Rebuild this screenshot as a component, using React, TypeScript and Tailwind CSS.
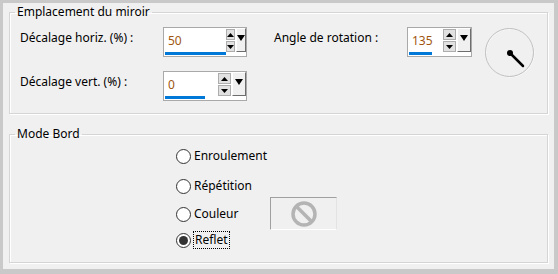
import * as React from "react";

type SpinProps = {
  value: string;
  width: string;
  bar: string;
};

const ArrowUp = () => (
  <svg width="7" height="4" viewBox="0 0 7 4">
    <path d="M0 4 L3.5 0 L7 4 Z" fill="#000" />
  </svg>
);

const ArrowDown = ({ w = 7, h = 4 }: { w?: number; h?: number }) => (
  <svg width={w} height={h} viewBox={`0 0 ${w} ${h}`}>
    <path d={`M0 0 L${w} 0 L${w / 2} ${h} Z`} fill="#000" />
  </svg>
);

const Spinner = ({ value, width, bar }: SpinProps) => {
  return (
    <div className={`flex h-[30px] ${width} border border-[#a9a9a9] bg-white`}>
      <div className="flex flex-1 flex-col pl-[1px]">
        <span className="mt-[5px] ml-[3px] text-[12px] leading-4 text-[#a0560f]">{value}</span>
        <div className={`mt-[3px] h-[3px] ${bar} bg-[#0078d7]`} />
      </div>
      <div className="mt-[1px] flex w-[13px] flex-col gap-[1px]">
        <div className="flex h-[11px] items-center justify-center border border-[#adadad] bg-[#e1e1e1]">
          <ArrowUp />
        </div>
        <div className="flex h-[11px] items-center justify-center border border-[#adadad] bg-[#e1e1e1]">
          <ArrowDown />
        </div>
      </div>
      <div className="ml-[1px] flex h-[24px] w-[14px] justify-center border-t border-l border-r border-b border-t-white border-l-white border-r-[#6d6d6d] border-b-[#6d6d6d] bg-[#f0f0f0] pt-[6px]">
        <ArrowDown w={8} h={6} />
      </div>
    </div>
  );
};

const Dial = () => (
  <svg width="50" height="50" viewBox="0 0 50 50">
    <circle cx="25" cy="25" r="24" fill="none" stroke="#ffffff" strokeWidth="1" />
    <circle cx="24.5" cy="24.5" r="24" fill="none" stroke="#bdbdbd" strokeWidth="1" />
    <line x1="25" y1="25" x2="38" y2="38" stroke="#000" strokeWidth="2.5" strokeLinecap="round" />
    <circle cx="25" cy="25" r="3" fill="#000" />
  </svg>
);

const Radio = ({ label, checked, focused }: { label: string; checked?: boolean; focused?: boolean }) => (
  <div className="flex h-4 items-center">
    <div className="flex h-[15px] w-[15px] items-center justify-center rounded-full border border-[#333333] bg-white">
      {checked && <div className="h-[9px] w-[9px] rounded-full bg-[#333333]" />}
    </div>
    <span
      className={
        focused
          ? "ml-[2px] border border-dotted border-black px-[1px] leading-4"
          : "ml-[3px] leading-4"
      }
    >
      {label}
    </span>
  </div>
);

export default function App() {
  return (
    <div className="h-[274px] w-[558px] bg-[#c9c9c9] pt-[3px] pr-[4px] pb-[5px] pl-[3px] font-['Segoe_UI','Noto_Sans',sans-serif] text-[12px] text-black">
      <div className="flex h-full flex-col bg-[#f0f0f0] pt-[1px]">
        <fieldset className="mx-[6px] border border-[#d5d5d5] pb-[12px] shadow-[inset_1px_1px_0_#ffffff,1px_1px_0_#ffffff]">
          <legend className="ml-[5px] px-[2px] leading-4">Emplacement du miroir</legend>
          <div className="flex items-start pt-[7px] pl-[10px]">
            <div className="flex flex-col gap-[14px]">
              <div className="flex items-start">
                <span className="mt-[3px] w-[143px] leading-4">Décalage horiz. (%) :</span>
                <Spinner value="50" width="w-[84px]" bar="w-[61px]" />
              </div>
              <div className="flex items-start">
                <span className="mt-[3px] w-[143px] leading-4">Décalage vert. (%) :</span>
                <Spinner value="0" width="w-[84px]" bar="w-[40px]" />
              </div>
            </div>
            <span className="mt-[3px] ml-[27px] w-[133px] leading-4">Angle de rotation :</span>
            <Spinner value="135" width="w-[65px]" bar="w-[23px]" />
            <div className="mt-[1px] ml-[13px]">
              <Dial />
            </div>
          </div>
        </fieldset>

        <fieldset className="mx-[6px] mt-[12px] border border-[#d5d5d5] pb-[14px] shadow-[inset_1px_1px_0_#ffffff,1px_1px_0_#ffffff]">
          <legend className="ml-[5px] px-[2px] leading-4">Mode Bord</legend>
          <div className="flex items-start pt-[6px] pl-[166px]">
            <div className="flex w-[94px] flex-col">
              <Radio label="Enroulement" />
              <div className="mt-[14px]">
                <Radio label="Répétition" />
              </div>
              <div className="mt-[12px]">
                <Radio label="Couleur" />
              </div>
              <div className="mt-[10px]">
                <Radio label="Reflet" checked focused />
              </div>
            </div>
            <div className="mt-[49px] flex h-[33px] w-[67px] items-center justify-center border border-t-[#a0a0a0] border-l-[#a0a0a0] border-r-[#e3e3e3] border-b-[#ffffff] bg-[#f0f0f0]">
              <svg width="28" height="28" viewBox="0 0 28 28">
                <circle cx="14" cy="14" r="11" fill="none" stroke="#b4b4b4" strokeWidth="3.5" />
                <line x1="6.5" y1="6.5" x2="21.5" y2="21.5" stroke="#b4b4b4" strokeWidth="3.5" />
              </svg>
            </div>
          </div>
        </fieldset>
      </div>
    </div>
  );
}
